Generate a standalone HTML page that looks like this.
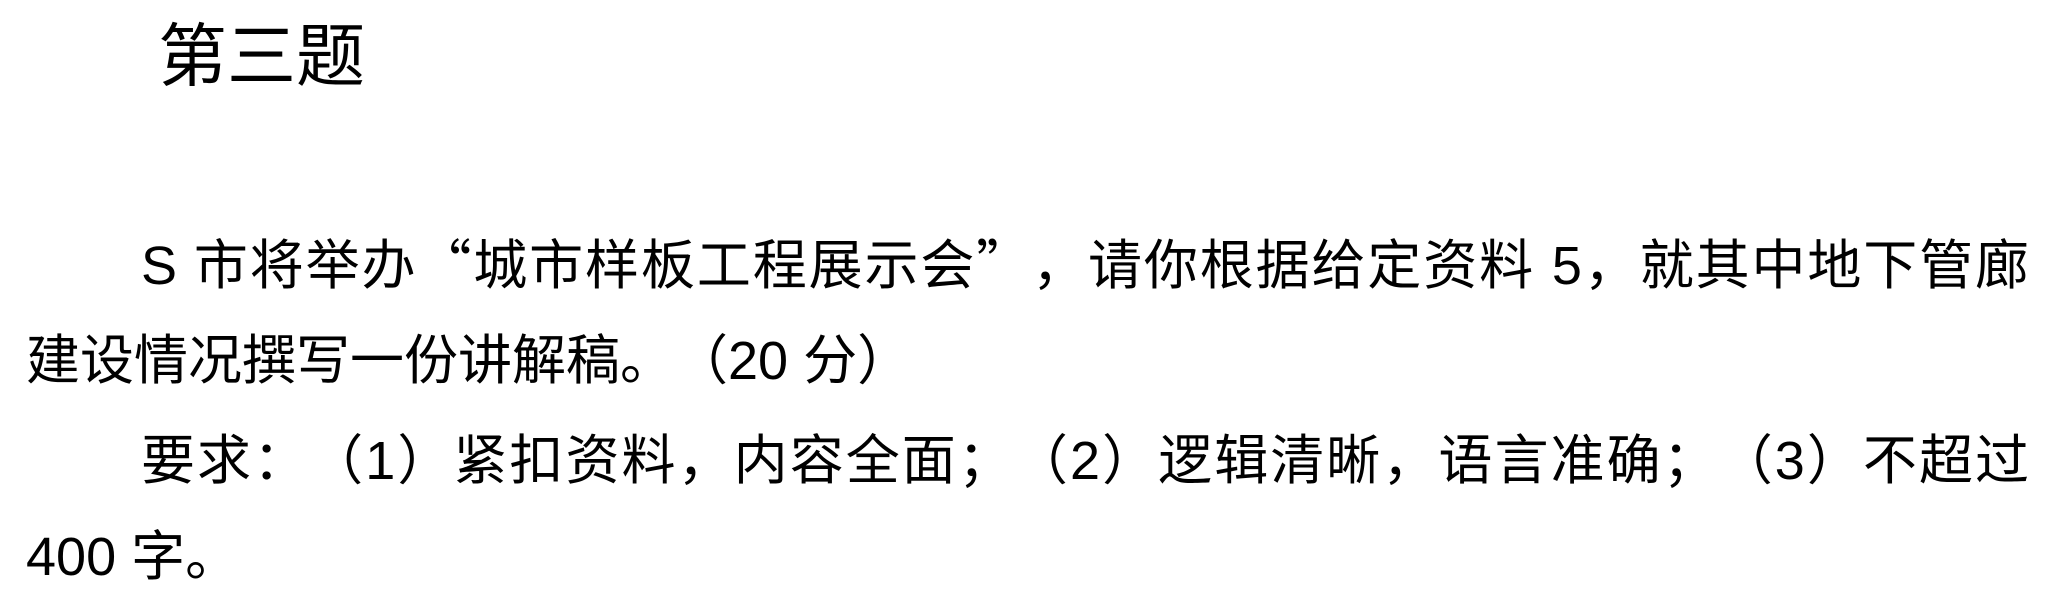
<!DOCTYPE html>
<html><head><meta charset="utf-8"><style>
body{margin:0;width:2050px;height:614px;background:#fff;overflow:hidden;font-family:"Liberation Sans","Noto Sans CJK SC",sans-serif;color:#000;text-spacing-trim:space-all}
.t{position:absolute;left:158px;top:12px;font-size:69px;line-height:90px}
.l{position:absolute;font-size:54px;line-height:70px;white-space:nowrap}
.j{text-align:justify;text-align-last:justify;white-space:normal}
.p{font-family:"Noto Sans CJK SC",sans-serif}
</style></head><body>
<div class="t">第三题</div>
<div class="l j" style="left:141px;width:1888px;top:226px">S 市将举办<span class="p">“</span>城市样板工程展示会<span class="p">”</span>，请你根据给定资料 5，就其中地下管廊</div>
<div class="l" style="left:26px;top:321px">建设情况撰写一份讲解稿<span class="p">。（</span>20 分<span class="p">）</span></div>
<div class="l j" style="left:141px;width:1888px;top:421px">要求<span class="p">：（</span>1<span class="p">）</span>紧扣资料，内容全面<span class="p">；（</span>2<span class="p">）</span>逻辑清晰，语言准确<span class="p">；（</span>3<span class="p">）</span>不超过</div>
<div class="l" style="left:26px;top:517px">400 字<span class="p">。</span></div>
</body></html>
